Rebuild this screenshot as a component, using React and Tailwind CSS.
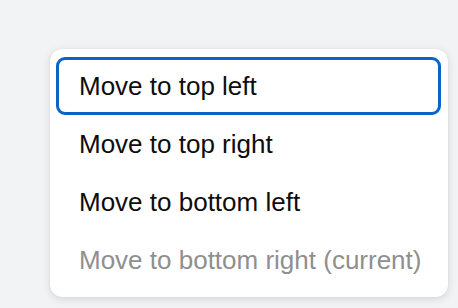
import React from "react";

const items = [
  { label: "Move to top left", focused: true },
  { label: "Move to top right" },
  { label: "Move to bottom left" },
  { label: "Move to bottom right (current)", disabled: true },
];

export default function App() {
  return (
    <div
      className="w-[458px] h-[308px] bg-[#f2f3f5] pt-[49px] pl-[50px] overflow-hidden"
      style={{ fontFamily: '"Liberation Sans", Arial, sans-serif' }}
    >
      <div className="w-[398px] h-[248px] bg-white rounded-[12px] shadow-[0_2px_8px_rgba(0,0,0,0.12),0_0_1px_rgba(0,0,0,0.15)] py-2 pl-[6px] pr-[7px] flex flex-col">
        {items.map((it) => (
          <div
            key={it.label}
            className={
              "h-[58px] flex items-center pl-[20px] rounded-[9px] border-[3px] text-[26px] leading-none " +
              (it.focused ? "border-[#0a63c6] " : "border-transparent ") +
              (it.disabled ? "text-[#8f8f8f]" : "text-[#0d0d0d]")
            }
          >
            {it.label}
          </div>
        ))}
      </div>
    </div>
  );
}
